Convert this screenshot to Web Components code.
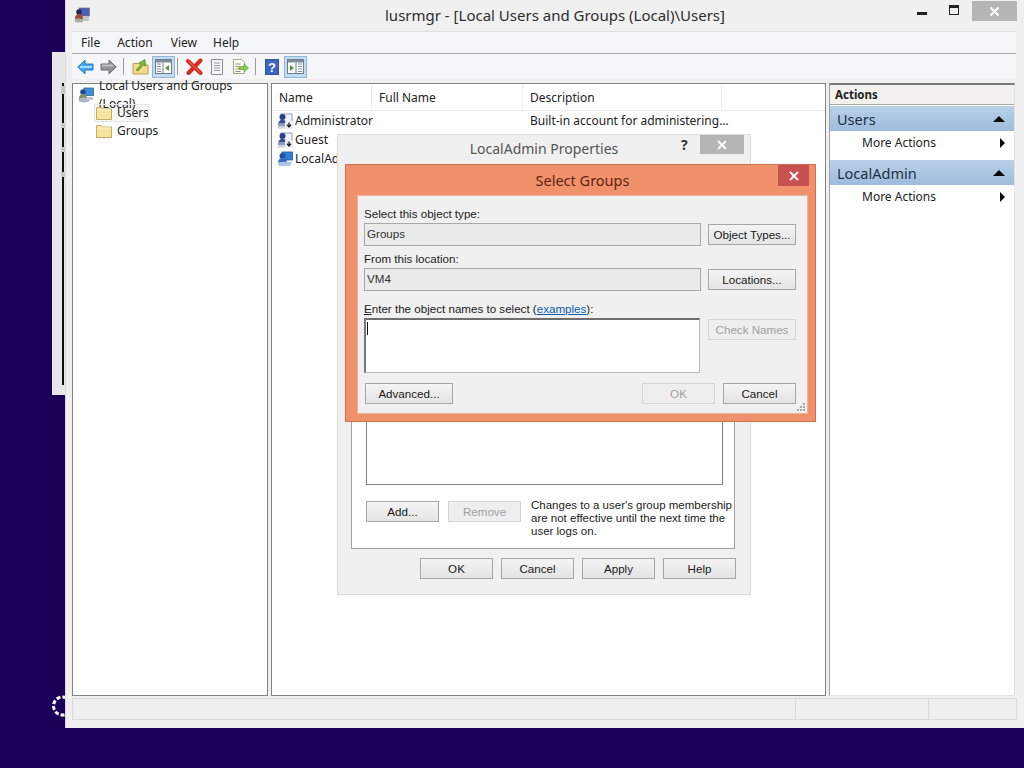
<!DOCTYPE html>
<html lang="en"><head><meta charset="utf-8"><title>lusrmgr</title>
<style>
html,body{margin:0;padding:0;height:100%;overflow:hidden;background:#1a0058;}
body{position:relative;width:1024px;height:768px;font-family:"Noto Sans",sans-serif;}
</style></head><body>
<bg-window></bg-window>
<busy-spinner></busy-spinner>
<mmc-window></mmc-window>
<props-dialog></props-dialog>
<select-groups></select-groups>
<script>
const ICONS={
back:`<svg width="17" height="16" viewBox="0 0 17 16"><path d="M.8 8 8 1.2V5h8v6H8v3.8z" fill="#45a8ee" stroke="#1f78c8"/><path d="M3 8h12" stroke="#a5dcfa" stroke-width="2"/></svg>`,
fwd:`<svg width="17" height="16" viewBox="0 0 17 16"><path d="M16.2 8 9 1.2V5H1v6h8v3.8z" fill="#8f9496" stroke="#6a6e70"/><path d="M2 6.5h11" stroke="#bfc3c5" stroke-width="2"/></svg>`,
up:`<svg width="17" height="17" viewBox="0 0 17 17"><path d="M1 5.500h6l1.500 1.500h7.500v9H1z" fill="#f3d98b" stroke="#b9a05a"/><path d="M4 12 9 6.500 7 5l6-3.500L13.500 8l-2-1.200L6 13z" fill="#7fb53c" stroke="#4f8a1f" stroke-width=".7"/></svg>`,
treeT:`<svg width="17" height="15" viewBox="0 0 17 15"><rect x=".5" y=".5" width="16" height="14" fill="#fff" stroke="#6d7c8a"/><rect x="1" y="1" width="15" height="2.500" fill="#7d8e9e"/><path d="M2 5h4M2 7.500h4M2 10h4M2 12.500h4" stroke="#7d8e9e"/><path d="M8 4v10" stroke="#6d7c8a"/><path d="M14 6v6l-4-3z" fill="#4c9a2a"/></svg>`,
del:`<svg width="17" height="17" viewBox="0 0 17 17"><path d="M2 3 14.500 15M14.500 2.500 2.500 15" stroke="#d62a22" stroke-width="4" stroke-linecap="round"/><path d="M3 3.500l11 11" stroke="#f2776b" stroke-width="1"/></svg>`,
prop:`<svg width="16" height="16" viewBox="0 0 16 16"><path d="M2.500.5h11v15h-11z" fill="#f6f6f6" stroke="#8d8d8d"/><path d="M1 2.500h2M1 13.500h2" stroke="#a9a9a9"/><path d="M5 4h6M5 6.500h6M5 9h6M5 11.500h6" stroke="#9a9a9a"/></svg>`,
exp:`<svg width="17" height="16" viewBox="0 0 17 16"><path d="M1.500.5h8l3 3v11h-11z" fill="#fbfbf4" stroke="#a5a58c"/><path d="M3.500 5h5M3.500 7.500h3M3.500 10h3M3.500 12.500h5" stroke="#8f8f80"/><path d="M7 7.500h5V5l4.500 4-4.500 4v-2.500H7z" fill="#8ccc4d" stroke="#5c9b27" stroke-width=".7"/></svg>`,
help:`<svg width="14" height="16" viewBox="0 0 14 16"><rect width="14" height="16" fill="#2f55a8"/><rect x="1" y="1" width="12" height="14" fill="#3a66be"/><text x="7" y="13" text-anchor="middle" font-family="Liberation Sans" font-weight="700" font-size="13" fill="#fff">?</text></svg>`,
paneT:`<svg width="17" height="15" viewBox="0 0 17 15"><rect x=".5" y=".5" width="16" height="14" fill="#fff" stroke="#6d7c8a"/><rect x="1" y="1" width="15" height="2.500" fill="#7d8e9e"/><path d="M11 5h4M11 7.500h4M11 10h4M11 12.500h4" stroke="#7d8e9e"/><path d="M9 4v10" stroke="#6d7c8a"/><path d="M3 6v6l4-3z" fill="#4c9a2a"/></svg>`,
folder:`<svg width="16" height="14" viewBox="0 0 16 14"><path d="M.5 1.500h5l1 1.500h9v10.500H.5z" fill="#f6e3a0" stroke="#c8ad62"/><path d="M1 4h14" stroke="#fbf2cc"/></svg>`,
user:`<svg width="16" height="16" viewBox="0 0 16 16"><rect x="4" y="1" width="11" height="8" fill="#f1f3fa" stroke="#7c86a8" stroke-width=".8"/><circle cx="5.500" cy="4" r="3" fill="#2b3d8c"/><path d="M1 13c0-5 2-6 4.500-6S10 8 10 13z" fill="#3a4a94"/><rect x="1" y="10" width="8" height="5.500" fill="#b6bccb" opacity=".7"/><rect x="8" y="8" width="8" height="8" rx="1" fill="#eceef2"/><path d="M12 9.500v4M10 11.800l2 2.200 2-2.200" stroke="#222" stroke-width="1.300" fill="none"/></svg>`,
admin:`<svg width="16" height="16" viewBox="0 0 16 16"><rect x="5" y="1" width="10.500" height="8" fill="#2f7fd6" stroke="#1f5aa8" stroke-width=".8"/><circle cx="5.500" cy="5" r="3" fill="#2b4fa0"/><path d="M1 13c0-5 2-6 4.500-6S10 8 10 13z" fill="#3a6cc0"/><path d="M1 11h14l-2 4H2z" fill="#a9c6e8"/></svg>`,
root:`<svg width="16" height="16" viewBox="0 0 16 16"><rect x="6" y="1" width="9.500" height="7.500" fill="#3d8fe0" stroke="#3a5fa0" stroke-width=".8"/><circle cx="5" cy="5" r="2.800" fill="#274a94"/><path d="M1 12c0-4 2-5 4-5s4 1 4 5z" fill="#7e8f5c"/><ellipse cx="6" cy="13" rx="5.500" ry="2.500" fill="#aeb6c4"/><path d="M9 10h6v3H9z" fill="#c3c8d2"/></svg>`,
mmc:`<svg width="16" height="16" viewBox="0 0 16 16"><rect x="5" y="1" width="10.500" height="8" fill="#4f5fb8" stroke="#6c7488" stroke-width=".7"/><circle cx="5" cy="5" r="2.800" fill="#1f2a55"/><path d="M1 12c0-4 2-5 4-5s4 1 4 5z" fill="#a04a3a"/><ellipse cx="5" cy="13.500" rx="4.500" ry="2" fill="#a8b09a"/><path d="M9 10h6v4H9z" fill="#c2c6cb"/></svg>`
};
class XIcon extends HTMLElement{connectedCallback(){const s=this.attachShadow({mode:'open'});s.innerHTML=`<style>:host{display:inline-flex;flex:none;line-height:0}</style>`+ICONS[this.getAttribute('name')];}}
customElements.define('x-icon',XIcon);

class WinBtn extends HTMLElement{connectedCallback(){const s=this.attachShadow({mode:'open'});s.innerHTML=`<style>
:host{display:flex;align-items:center;justify-content:center;flex:none;box-sizing:border-box;width:var(--w,73px);height:21px;border:1px solid #a6a6a6;background:linear-gradient(#f4f4f4,#e4e4e4);font:11.6px "Liberation Sans",sans-serif;color:#1a1a1a;padding-bottom:1px}
:host([disabled]){border-color:#d5d5d5;background:#eeeeee;color:#a0a0a0}
</style><slot></slot>`;}}
customElements.define('win-btn',WinBtn);

class BgWindow extends HTMLElement{connectedCallback(){const s=this.attachShadow({mode:'open'});s.innerHTML=`<style>
:host{position:absolute;left:52px;top:52px;width:30px;height:343px;background:#e8e6ea;display:block}
.l{position:absolute;left:10px;top:31px;width:2px;height:302px;background:linear-gradient(#111 0 0) 0 0/2px 100%;}
.n{position:absolute;left:9px;width:4px;height:5px;background:#c8c8c8}
</style><div class="l"></div><div class="n" style="top:34px;height:8px"></div><div class="n" style="top:71px"></div><div class="n" style="top:95px"></div><div class="n" style="top:120px"></div>`;}}
customElements.define('bg-window',BgWindow);

class BusySpinner extends HTMLElement{connectedCallback(){const s=this.attachShadow({mode:'open'});s.innerHTML=`<style>:host{position:absolute;left:50px;top:693px;display:block;line-height:0}</style><svg width="26" height="26" viewBox="0 0 26 26"><circle cx="12.500" cy="13" r="9" fill="none" stroke="#fff" stroke-width="3" stroke-dasharray="4 2"/></svg>`;}}
customElements.define('busy-spinner',BusySpinner);

class TreePane extends HTMLElement{connectedCallback(){const s=this.attachShadow({mode:'open'});s.innerHTML=`<style>
:host{display:block;box-sizing:border-box;background:#fff;border:1px solid #828282;border-width:1px 1px 1px 1px;padding:2px 0 0 5px;font:12px/18px "Noto Sans",sans-serif;color:#222}
.r{display:flex;align-items:center;height:18px;gap:5px}
.c{margin:0 0 0 16px;padding:0 2px 0 2px;gap:5px;width:fit-content;box-sizing:border-box}
.sel{background:#f7f7f7;outline:1px solid #e6e6e6;outline-offset:-1px;width:55px}
</style>
<div class="r"><x-icon name="root"></x-icon><span>Local Users and Groups (Local)</span></div>
<div class="r c sel"><x-icon name="folder"></x-icon><span>Users</span></div>
<div class="r c"><x-icon name="folder"></x-icon><span>Groups</span></div>`;}}
customElements.define('tree-pane',TreePane);

class ListPane extends HTMLElement{connectedCallback(){const s=this.attachShadow({mode:'open'});s.innerHTML=`<style>
:host{display:block;box-sizing:border-box;background:#fff;border:1px solid #828282;font:12px/19px "Noto Sans",sans-serif;color:#222}
.h{display:grid;grid-template-columns:100px 151px 199px 1fr;height:26px;align-items:center;border-bottom:1px solid #ededed;margin-bottom:0}
.h div{height:100%;display:flex;align-items:center;padding-left:7px;box-sizing:border-box;border-right:1px solid #efefef}
.h div:last-child{border:0}
.row{display:grid;grid-template-columns:251px 1fr;height:19px;padding-left:5px;align-items:center}
.row>div:first-child{display:flex;align-items:center;gap:2px}
.row>div:last-child{padding-left:2px}
.w{margin-top:0}
.hs{padding-top:0}
</style>
<div class="h"><div>Name</div><div>Full Name</div><div>Description</div><div></div></div>
<div class="row" style="margin-top:0"><div><x-icon name="user"></x-icon>Administrator</div><div>Built-in account for administering...</div></div>
<div class="row"><div><x-icon name="user"></x-icon>Guest</div><div></div></div>
<div class="row"><div><x-icon name="admin"></x-icon>LocalAdmin</div><div></div></div>`;}}
customElements.define('list-pane',ListPane);

class ActionsPane extends HTMLElement{connectedCallback(){const s=this.attachShadow({mode:'open'});s.innerHTML=`<style>
:host{display:block;box-sizing:border-box;background:#fff;border-top:2px solid #7a7a7a;border-left:1px solid #a0a0a0;border-bottom:1px solid #e3e3e3;border-right:1px solid #e3e3e3;font:12px "Noto Sans",sans-serif;color:#222}
.t{height:20px;box-sizing:border-box;background:#f2f1ee;border-bottom:1px solid #a8a8a8;display:flex;align-items:center;padding-left:5px;font-weight:700;font-size:11.5px}
.b{height:25px;margin-top:1px;background:linear-gradient(#b9d0e8,#a0bcdb);display:flex;align-items:center;justify-content:space-between;padding:0 6px 0 7px;font-size:14.500px;color:#1c3048}
.g{height:23px;display:flex;align-items:center;justify-content:space-between;padding:0 9px 0 32px}
.g2{margin-top:6px}
.up{width:0;height:0;border:6px solid transparent;border-top:0;border-bottom:6px solid #0a0a0a;margin-right:3px}
.ar{width:0;height:0;border:5.500px solid transparent;border-right:0;border-left:5px solid #0a0a0a}
</style>
<div class="t">Actions</div>
<div class="b">Users<i class="up"></i></div>
<div class="g">More Actions<i class="ar"></i></div>
<div class="b g2">LocalAdmin<i class="up"></i></div>
<div class="g">More Actions<i class="ar"></i></div>`;}}
customElements.define('actions-pane',ActionsPane);

class MmcWindow extends HTMLElement{connectedCallback(){const s=this.attachShadow({mode:'open'});s.innerHTML=`<style>
:host{position:absolute;left:65px;top:0;width:959px;height:728px;display:flex;flex-direction:column;box-sizing:border-box;background:#f0f0f0;border-left:1px solid #dcdcdc;font-family:"Noto Sans",sans-serif;color:#222}
.title{height:30px;display:flex;align-items:center;position:relative;flex:none;padding-left:8px}
.title .tx{position:absolute;left:319px;top:4px;font-size:15px;line-height:22px;color:#2e2e2e;white-space:nowrap}
.ctl{margin-left:auto;display:flex;align-items:flex-start;height:100%;padding-right:7px}
.min{width:10px;height:3px;background:#222;margin:12px 22px 0 0}
.max{width:8px;height:6px;border:1.500px solid #222;border-top-width:3px;margin:5px 4px 0 0}
.cl{width:45px;height:20px;background:#b5b5b5;margin:1px 0 0 9px;display:flex;align-items:center;justify-content:center}
.bars{margin:1px 8px 0 6px;background:#f5f6f7;flex:none;border-top:1px solid #dedede}
.menu{height:21px;display:flex;align-items:center;font-size:12px;border-bottom:1px solid #a9a9a9;padding-left:9px;gap:0}
.menu span{margin-right:17px}
.tool{height:25px;display:flex;align-items:center;padding-left:5px;position:relative}
.sep{width:1px;height:17px;background:#9a9a9a;flex:none}
.on{width:23px;height:22px;box-sizing:border-box;background:#c3dcf4;border:1px solid #8fb7de;display:flex;align-items:center;justify-content:center;flex:none}
.panes{flex:1;display:grid;grid-template-columns:196px 555px 186px;column-gap:3px;margin:4px 8px 0 6px;min-height:0}
actions-pane{margin-left:0}
.status{height:22px;margin:2px 7px 8px 6px;box-sizing:border-box;flex:none;border:1px solid #dadada;background:#efefef;display:grid;grid-template-columns:723px 133px 1fr}
.status div{border-right:1px solid #dadada}
.status div:last-child{border:0}
</style>
<div class="title"><x-icon name="mmc"></x-icon><span class="tx">lusrmgr - [Local Users and Groups (Local)\\Users]</span>
<div class="ctl"><div class="min"></div><div class="max"></div><div class="cl"><svg width="11" height="11" viewBox="0 0 11 11"><path d="M1.500 1.500l8 8M9.500 1.500l-8 8" stroke="#fff" stroke-width="2"/></svg></div></div></div>
<div class="bars">
<div class="menu"><span>File</span><span style="margin-right:18px">Action</span><span style="margin-right:16px">View</span><span>Help</span></div>
<div class="tool">
<x-icon name="back"></x-icon><x-icon name="fwd" style="margin-left:6px"></x-icon><div class="sep" style="margin-left:6px"></div>
<x-icon name="up" style="margin-left:8px"></x-icon><div class="on" style="margin-left:3px"><x-icon name="treeT"></x-icon></div><div class="sep" style="margin-left:2px"></div>
<x-icon name="del" style="margin-left:8px"></x-icon><x-icon name="prop" style="margin-left:6px"></x-icon><x-icon name="exp" style="margin-left:7px"></x-icon><div class="sep" style="margin-left:6px"></div>
<x-icon name="help" style="margin-left:9px"></x-icon><div class="on" style="margin-left:5px"><x-icon name="paneT"></x-icon></div>
</div></div>
<div class="panes"><tree-pane></tree-pane><list-pane></list-pane><actions-pane></actions-pane></div>
<div class="status"><div></div><div></div><div></div></div>`;}}
customElements.define('mmc-window',MmcWindow);

class PropsDialog extends HTMLElement{connectedCallback(){const s=this.attachShadow({mode:'open'});s.innerHTML=`<style>
:host{position:absolute;left:337px;top:134px;width:414px;height:461px;box-sizing:border-box;background:#f0f0f0;border:1px solid #dcdcdc;display:flex;flex-direction:column;font:11.600px "Liberation Sans",sans-serif;color:#222}
.tb{height:30px;flex:none;display:flex;position:relative;font:14px/28px "Noto Sans",sans-serif;color:#555;justify-content:center;}
.tb b{font:700 14px/20px "Noto Sans",sans-serif;color:#333;position:absolute;left:343px;top:0}
.x{position:absolute;left:362px;top:0;width:44px;height:19px;background:#b5b5b5;display:flex;align-items:center;justify-content:center}
.page{flex:1;margin:5px 15px 0 13px;background:#fff;border:1px solid #a0a0a0;display:flex;flex-direction:column;padding:19px 11px 12px 14px;min-height:0}
.list{flex:1;border:1px solid #828282;background:#fff}
.row{display:flex;margin-top:15px;align-items:flex-start;height:36px}
.row win-btn{margin-top:1px}
.note{margin-left:10px;line-height:13px;margin-top:-1px;font-size:11.500px;white-space:nowrap;color:#222}
.bot{height:45px;flex:none;display:flex;gap:8px;justify-content:flex-end;padding:9px 14px 0 0;box-sizing:border-box}
</style>
<div class="tb">LocalAdmin Properties<b>?</b><div class="x"><svg width="10" height="10" viewBox="0 0 10 10"><path d="M1 1l8 8M9 1l-8 8" stroke="#fff" stroke-width="1.800"/></svg></div></div>
<div class="page"><div class="list"></div>
<div class="row"><win-btn>Add...</win-btn><win-btn disabled style="margin-left:9px;--w:73px">Remove</win-btn><div class="note">Changes to a user's group membership<br>are not effective until the next time the<br>user logs on.</div></div></div>
<div class="bot"><win-btn>OK</win-btn><win-btn>Cancel</win-btn><win-btn>Apply</win-btn><win-btn>Help</win-btn></div>`;}}
customElements.define('props-dialog',PropsDialog);

class SelectGroups extends HTMLElement{connectedCallback(){const s=this.attachShadow({mode:'open'});s.innerHTML=`<style>
:host{position:absolute;left:345px;top:164px;width:471px;height:258px;box-sizing:border-box;background:#f0916c;border:1px solid #d2704c;display:flex;flex-direction:column;font:11.600px "Liberation Sans",sans-serif;color:#222;padding:0 7px 7px 11px}
.tb{height:30px;flex:none;display:flex;align-items:center;justify-content:center;font:14.500px "Noto Sans",sans-serif;color:#5c2410;position:relative;padding-bottom:0}
.x{position:absolute;right:-1px;top:0;width:31px;height:21px;background:#c75050;display:flex;align-items:center;justify-content:center}
.body{flex:1;background:#f0f0f0;border:1px solid #e5b39e;padding:11px 11px 0 6px;display:grid;grid-template-columns:337px 88px;column-gap:7px;align-content:start;position:relative}
.lb{grid-column:1/3;height:13px;line-height:13px;margin-bottom:3px}
.lb u{text-decoration:underline}
.lb a{color:#0a5eb0;text-decoration:underline}
.f{height:23px;box-sizing:border-box;background:#ebebeb;border:1px solid #a8a8a8;padding:2px 2px;line-height:15px;color:#333}
.s{margin-bottom:6px}
win-btn{--w:88px;margin-top:1px}
.ta{height:55px;box-sizing:border-box;background:#fff;border:1px solid #b8b8b8;border-top:2px solid #6e6e6e;border-left:2px solid #7a7a7a;position:relative;margin-right:1px}
.caret{position:absolute;left:1px;top:2px;width:1px;height:13px;background:#111}
.bot{grid-column:1/3;display:flex;justify-content:flex-end;gap:8px;margin-top:10px;padding-left:1px}
.bot win-btn{--w:73px;margin:0}
.bot win-btn:first-child{--w:88px;margin-right:auto}
.grip{position:absolute;right:1px;bottom:1px;line-height:0}
</style>
<div class="tb">Select Groups<div class="x"><svg width="10" height="10" viewBox="0 0 10 10"><path d="M1 1l8 8M9 1l-8 8" stroke="#fff" stroke-width="1.800"/></svg></div></div>
<div class="body">
<div class="lb">Select this object type:</div>
<div class="f">Groups</div><win-btn>Object Types...</win-btn>
<div class="lb" style="margin-top:6px;margin-bottom:3px">From this location:</div>
<div class="f">VM4</div><win-btn>Locations...</win-btn>
<div class="lb" style="margin-top:11px;margin-bottom:3px"><u>E</u>nter the object names to select (<a>examples</a>):</div>
<div class="ta"><div class="caret"></div></div><win-btn disabled>Check Names</win-btn>
<div class="bot"><win-btn>Advanced...</win-btn><win-btn disabled>OK</win-btn><win-btn>Cancel</win-btn></div>
<div class="grip"><svg width="9" height="9" viewBox="0 0 9 9" fill="#a8a8a8"><rect x="6" y="0" width="2" height="2"/><rect x="3" y="3" width="2" height="2"/><rect x="6" y="3" width="2" height="2"/><rect x="0" y="6" width="2" height="2"/><rect x="3" y="6" width="2" height="2"/><rect x="6" y="6" width="2" height="2"/></svg></div>
</div>`;}}
customElements.define('select-groups',SelectGroups);
</script>
</body></html>
